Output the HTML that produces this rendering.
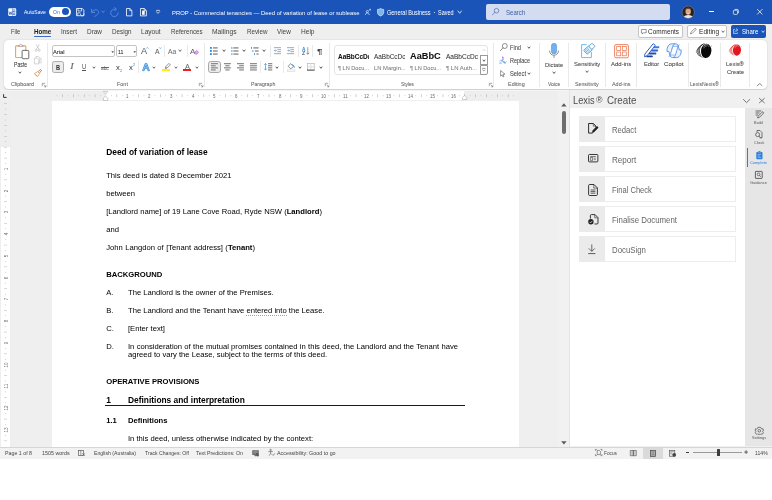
<!DOCTYPE html>
<html><head><meta charset="utf-8"><title>Word</title>
<style>
*{box-sizing:border-box;margin:0;padding:0}
html,body{width:772px;height:500px;overflow:hidden;background:#fff;font-family:"Liberation Sans",sans-serif;}
.a{position:absolute}
svg{overflow:visible}
.t{position:absolute;white-space:nowrap;transform-origin:0 0;display:block}
#win{position:absolute;left:0;top:0;width:772px;height:459px;background:#efefef;overflow:hidden;will-change:transform;filter:blur(0.35px)}
#title{position:absolute;left:0;top:0;width:772px;height:23.7px;background:#1b54b8;color:#fff}
#ribbon{position:absolute;left:4.3px;top:39.7px;width:762.5px;height:49.3px;background:#fff;border-radius:4.5px;box-shadow:0 0.5px 1.8px rgba(0,0,0,.16)}
#page{position:absolute;left:52px;top:101px;width:467.2px;height:346.5px;background:#fff}
#doc{color:#000}
#doc u{text-decoration:none;border-bottom:0.6px dotted #8aa2e6;padding-bottom:0}
#status{position:absolute;left:0;top:447.5px;width:772px;height:11.5px;background:#f2f2f2;border-top:0.6px solid #dadada}
.ui{color:#3a3a3a}
.rb .t{-webkit-text-stroke:0.05px currentColor}
</style></head><body>
<div id="win">
<div id="title"></div>
<div id="ribbon"></div>
<div id="page"></div>
<div class="ui">
<svg class="a" style="left:7.90px;top:8.00px;" width="8.4" height="8.2" viewBox="0 0 8.4 8.2"><rect x="0.2" y="0.3" width="8" height="7.6" rx="1.1" fill="#fff"/><path d="M4.9 2H7.4M4.9 3.6H7.4M4.9 5.2H7.4M4.9 6.7H7.4" stroke="#1b54b8" stroke-width="0.75"/><path d="M4.5 0.4V7.8" stroke="#1b54b8" stroke-width="0.5"/><path d="M1 3.4L1.8 6.6L2.5 4.2L3.2 6.6L4 3.4" fill="none" stroke="#1b54b8" stroke-width="0.65" stroke-linejoin="round"/></svg>
<span class="t" style="left:23.90px;top:9.00px;font-size:5.6px;line-height:6px;color:#fff;transform:scaleX(0.898);">AutoSave</span>
<div class="a" style="left:49.20px;top:6.70px;width:21.60px;height:9.90px;background:#fff;border-radius:5px"></div>
<span class="t" style="left:52.70px;top:8.60px;font-size:5.3px;line-height:6px;color:#3a66c4;transform:scaleX(0.948);">On</span>
<div class="a" style="left:62.00px;top:8.10px;width:7.20px;height:7.20px;background:#1b54b8;border-radius:50%"></div>
<svg class="a" style="left:76.30px;top:8.00px;" width="8.4" height="8.2" viewBox="0 0 8.4 8.2"><path d="M0.5 0.5H6.3L7.9 2.1V7.7H0.5Z" fill="none" stroke="#fff" stroke-width="0.8" stroke-linejoin="round"/><path d="M2 0.5V3H5.6V0.5M1.8 7.7V4.8H4.4" fill="none" stroke="#fff" stroke-width="0.7"/><path d="M4.6 5.6a1.7 1.7 0 1 0 3.2 0" fill="none" stroke="#fff" stroke-width="0.7"/></svg>
<svg class="a" style="left:91.00px;top:7.60px;" width="8.4" height="9" viewBox="0 0 8.4 9"><path d="M0.6 1.2V4.4H3.8" fill="none" stroke="#6b92df" stroke-width="0.8" stroke-linecap="round" stroke-linejoin="round"/><path d="M0.8 4.2C2.2 1.6 5.6 0.9 7.2 2.9C8.6 4.7 6.8 6.8 3.6 8.4" fill="none" stroke="#6b92df" stroke-width="0.8" stroke-linecap="round"/></svg>
<svg class="a" style="left:101.35px;top:10.43px;" width="4.295999999999999" height="3.54" viewBox="0 0 4.295999999999999 3.54"><path d="M1 1 L2.15 2.54 L3.30 1" fill="none" stroke="#6b92df" stroke-width="0.75" stroke-linecap="round" stroke-linejoin="round"/></svg>
<svg class="a" style="left:109.90px;top:7.60px;" width="8.8" height="9" viewBox="0 0 8.8 9"><path d="M5 1.2A3.7 3.7 0 1 0 8.1 4.9" fill="none" stroke="#6b92df" stroke-width="0.8" stroke-linecap="round"/><path d="M4.6 -0.4L6.4 1.2L4.6 2.8" fill="none" stroke="#6b92df" stroke-width="0.8" stroke-linecap="round" stroke-linejoin="round"/></svg>
<svg class="a" style="left:125.60px;top:7.90px;" width="6.4" height="8.4" viewBox="0 0 6.4 8.4"><path d="M0.5 0.5H3.9L5.9 2.5V7.9H0.5Z" fill="none" stroke="#fff" stroke-width="0.8" stroke-linejoin="round"/><path d="M3.8 0.6V2.6H5.8" fill="none" stroke="#fff" stroke-width="0.7"/></svg>
<svg class="a" style="left:139.90px;top:7.90px;" width="6.9" height="8.4" viewBox="0 0 6.9 8.4"><path d="M0.5 0.5H4.3L6.4 2.6V7.9H0.5Z" fill="none" stroke="#fff" stroke-width="0.8" stroke-linejoin="round"/><rect x="2.1" y="2.6" width="2.6" height="4.2" fill="#fff"/><path d="M4.2 0.6V2.6H6.3" fill="none" stroke="#fff" stroke-width="0.7"/></svg>
<svg class="a" style="left:155.50px;top:10.40px;" width="4" height="4" viewBox="0 0 4 4"><path d="M0.3 0.4H3.7" stroke="#fff" stroke-width="0.75"/><path d="M0.4 1.7L2 3.4L3.6 1.7" fill="none" stroke="#fff" stroke-width="0.75" stroke-linecap="round" stroke-linejoin="round"/></svg>
<span class="t" style="left:172.30px;top:8.70px;font-size:6.2px;line-height:7px;color:#fff;transform:scaleX(0.949);">PROP - Commercial tenancies — Deed of variation of lease or sublease</span>
<svg class="a" style="left:364.60px;top:8.60px;" width="6" height="6.4" viewBox="0 0 6 6.4"><circle cx="2.3" cy="2.6" r="1.1" fill="none" stroke="#fff" stroke-width="0.6"/><path d="M0.3 6C0.5 4.4 1.4 4 2.3 4S4.1 4.4 4.3 6" fill="none" stroke="#fff" stroke-width="0.6"/><path d="M3.6 1.6L5.6 0.3M5.6 0.3H4.2M5.6 0.3V1.6" fill="none" stroke="#fff" stroke-width="0.5"/></svg>
<svg class="a" style="left:376.80px;top:7.80px;" width="7.2" height="8.4" viewBox="0 0 7.2 8.4"><path d="M3.6 0.4C2.6 1.2 1.6 1.5 0.5 1.5V4.4C0.5 6.2 1.8 7.3 3.6 8C5.4 7.3 6.7 6.2 6.7 4.4V1.5C5.6 1.5 4.6 1.2 3.6 0.4Z" fill="#7eb6ec" stroke="#d6e8fb" stroke-width="0.7" stroke-linejoin="round"/></svg>
<span class="t" style="left:386.90px;top:8.70px;font-size:6.4px;line-height:7px;color:#fff;transform:scaleX(0.865);">General Business</span>
<div class="a" style="left:433.80px;top:12.00px;width:1.30px;height:1.30px;background:#fff;border-radius:50%"></div>
<span class="t" style="left:438.40px;top:8.70px;font-size:6.4px;line-height:7px;color:#fff;transform:scaleX(0.854);">Saved</span>
<svg class="a" style="left:456.68px;top:10.45px;" width="5.444" height="4.3100000000000005" viewBox="0 0 5.444 4.3100000000000005"><path d="M1 1 L2.72 3.31 L4.44 1" fill="none" stroke="#fff" stroke-width="0.75" stroke-linecap="round" stroke-linejoin="round"/></svg>
<div class="a" style="left:485.90px;top:4.10px;width:184.10px;height:15.50px;background:#d3dcf0;border-radius:2px"></div>
<svg class="a" style="left:492.30px;top:8.40px;" width="7.2" height="7.2" viewBox="0 0 7.2 7.2"><circle cx="4.5" cy="2.7" r="2.3" fill="none" stroke="#3b5ca8" stroke-width="0.6"/><path d="M2.9 4.4L0.4 6.9" stroke="#3b5ca8" stroke-width="0.6" stroke-linecap="round"/></svg>
<span class="t" style="left:506.30px;top:8.70px;font-size:6.9px;line-height:7px;color:#3f5ea6;transform:scaleX(0.878);">Search</span>
<svg class="a" style="left:681.60px;top:5.70px;" width="12.4" height="12.4" viewBox="0 0 12.4 12.4"><defs><clipPath id="av"><circle cx="6.2" cy="6.2" r="6.1"/></clipPath></defs><g clip-path="url(#av)"><rect width="12.4" height="12.4" fill="#2b211c"/><ellipse cx="6.2" cy="5.4" rx="2.7" ry="3.3" fill="#d9a78c"/><path d="M3.3 4.6C3.4 2.2 5 1.4 6.3 1.4S9 2.2 9.1 4.6C8.4 3.4 7.4 3 6.2 3S4 3.4 3.3 4.6Z" fill="#6a4a3a"/><path d="M1 12.4C1.6 9.6 3.6 9 6.2 9S10.8 9.6 11.4 12.4Z" fill="#e9e4e0"/><path d="M5 7.2C5.6 7.8 6.8 7.8 7.4 7.2" stroke="#fff" stroke-width="0.5" fill="none"/></g><circle cx="6.2" cy="6.2" r="6.1" fill="none" stroke="#cbb" stroke-width="0.3"/></svg>
<div class="a" style="left:709.30px;top:11.40px;width:5.20px;height:0.70px;background:#fff;"></div>
<svg class="a" style="left:733.00px;top:8.60px;" width="5.8" height="5.8" viewBox="0 0 5.8 5.8"><rect x="0.4" y="1.3" width="4.1" height="4.1" rx="0.8" fill="none" stroke="#fff" stroke-width="0.7"/><path d="M1.6 0.4H4.3A1.1 1.1 0 0 1 5.4 1.5V4.2" fill="none" stroke="#fff" stroke-width="0.7"/></svg>
<svg class="a" style="left:757.00px;top:8.90px;" width="5.6" height="5.6" viewBox="0 0 5.6 5.6"><path d="M0.4 0.4L5.2 5.2M5.2 0.4L0.4 5.2" stroke="#fff" stroke-width="0.75" stroke-linecap="round"/></svg>
<span class="t" style="left:10.90px;top:28.40px;font-size:6.8px;line-height:7px;color:#444;transform:scaleX(0.849);">File</span>
<span class="t" style="left:33.70px;top:28.40px;font-size:6.8px;line-height:7px;font-weight:700;color:#222;transform:scaleX(0.916);">Home</span>
<span class="t" style="left:60.90px;top:28.40px;font-size:6.8px;line-height:7px;color:#444;transform:scaleX(0.941);">Insert</span>
<span class="t" style="left:86.80px;top:28.40px;font-size:6.8px;line-height:7px;color:#444;transform:scaleX(0.945);">Draw</span>
<span class="t" style="left:111.70px;top:28.40px;font-size:6.8px;line-height:7px;color:#444;transform:scaleX(0.926);">Design</span>
<span class="t" style="left:141.20px;top:28.40px;font-size:6.8px;line-height:7px;color:#444;transform:scaleX(0.965);">Layout</span>
<span class="t" style="left:171.00px;top:28.40px;font-size:6.8px;line-height:7px;color:#444;transform:scaleX(0.909);">References</span>
<span class="t" style="left:212.40px;top:28.40px;font-size:6.8px;line-height:7px;color:#444;transform:scaleX(0.986);">Mailings</span>
<span class="t" style="left:246.90px;top:28.40px;font-size:6.8px;line-height:7px;color:#444;transform:scaleX(0.919);">Review</span>
<span class="t" style="left:276.90px;top:28.40px;font-size:6.8px;line-height:7px;color:#444;transform:scaleX(0.944);">View</span>
<span class="t" style="left:300.50px;top:28.40px;font-size:6.8px;line-height:7px;color:#444;transform:scaleX(0.965);">Help</span>
<div class="a" style="left:33.70px;top:36.30px;width:17.30px;height:1.20px;background:#3c6ac6;border-radius:0.6px"></div>
<div class="a" style="left:638.00px;top:25.40px;width:44.60px;height:12.30px;background:#fff;border:0.6px solid #c4c4c4;border-radius:2px;"></div>
<svg class="a" style="left:641.20px;top:28.60px;" width="5.6" height="5.6" viewBox="0 0 5.6 5.6"><path d="M0.4 0.5H5.2V3.8H2.4L1.2 5V3.8H0.4Z" fill="none" stroke="#444" stroke-width="0.55" stroke-linejoin="round"/></svg>
<span class="t" style="left:648.40px;top:28.20px;font-size:6.3px;line-height:7px;color:#2a2a2a;transform:scaleX(1.021);">Comments</span>
<div class="a" style="left:686.80px;top:25.40px;width:40.30px;height:12.30px;background:#fff;border:0.6px solid #c4c4c4;border-radius:2px;"></div>
<svg class="a" style="left:689.60px;top:28.20px;" width="6.4" height="6.4" viewBox="0 0 6.4 6.4"><path d="M0.5 5.9L1 4.2L4.6 0.6A0.8 0.8 0 0 1 5.8 1.8L2.2 5.4Z" fill="none" stroke="#444" stroke-width="0.55" stroke-linejoin="round"/></svg>
<span class="t" style="left:699.00px;top:28.20px;font-size:6.3px;line-height:7px;color:#2a2a2a;transform:scaleX(1.049);">Editing</span>
<svg class="a" style="left:721.33px;top:30.09px;" width="4.132" height="3.43" viewBox="0 0 4.132 3.43"><path d="M1 1 L2.07 2.43 L3.13 1" fill="none" stroke="#3c3c3c" stroke-width="0.75" stroke-linecap="round" stroke-linejoin="round"/></svg>
<div class="a" style="left:730.80px;top:25.40px;width:35.60px;height:12.30px;background:#1b54b8;border-radius:2px"></div>
<svg class="a" style="left:733.20px;top:28.40px;" width="5.6" height="6" viewBox="0 0 5.6 6"><path d="M2 1.4H0.5V5.5H4.6V4.4" fill="none" stroke="#fff" stroke-width="0.55"/><path d="M1.9 4C2.1 2.6 3 1.9 4.4 1.9M3.4 0.6L4.8 1.9L3.4 3.2" fill="none" stroke="#fff" stroke-width="0.55" stroke-linecap="round" stroke-linejoin="round"/></svg>
<span class="t" style="left:741.70px;top:28.20px;font-size:6.3px;line-height:7px;color:#fff;transform:scaleX(0.970);">Share</span>
<svg class="a" style="left:760.53px;top:30.09px;" width="4.132" height="3.43" viewBox="0 0 4.132 3.43"><path d="M1 1 L2.07 2.43 L3.13 1" fill="none" stroke="#fff" stroke-width="0.75" stroke-linecap="round" stroke-linejoin="round"/></svg>
<div class="rb">
<svg class="a" style="left:15.00px;top:43.60px;" width="14.4" height="15.2" viewBox="0 0 14.4 15.2"><rect x="0.6" y="1.9" width="10.2" height="11.6" rx="0.8" fill="#fff" stroke="#efa352" stroke-width="1.1"/><path d="M3.2 2.4V1.6H4.4A1.3 1.3 0 0 1 7 1.6H8.2V2.4Z" fill="#fff" stroke="#9a9a9a" stroke-width="0.7" stroke-linejoin="round"/><rect x="7.1" y="6.4" width="6.7" height="8.3" rx="0.9" fill="#fff" stroke="#555" stroke-width="0.85"/></svg>
<span class="t" style="left:13.80px;top:60.60px;font-size:6.3px;line-height:7px;color:#333;transform:scaleX(0.819);">Paste</span>
<svg class="a" style="left:18.46px;top:70.67px;" width="3.8859999999999997" height="3.2649999999999997" viewBox="0 0 3.8859999999999997 3.2649999999999997"><path d="M1 1 L1.94 2.26 L2.89 1" fill="none" stroke="#3c3c3c" stroke-width="0.8" stroke-linecap="round" stroke-linejoin="round"/></svg>
<svg class="a" style="left:35.40px;top:43.60px;" width="5.4" height="8" viewBox="0 0 5.4 8"><path d="M1 0.3L4 5.2M4.4 0.3L1.4 5.2" stroke="#b5b5b5" stroke-width="0.6" fill="none"/><circle cx="1.2" cy="6.3" r="1" fill="none" stroke="#b5b5b5" stroke-width="0.6"/><circle cx="4.2" cy="6.3" r="1" fill="none" stroke="#b5b5b5" stroke-width="0.6"/></svg>
<svg class="a" style="left:34.30px;top:56.20px;" width="7.8" height="8.4" viewBox="0 0 7.8 8.4"><path d="M2 1.8V0.5H4.4L5.8 1.9V6.2H4.9" fill="none" stroke="#b9b9b9" stroke-width="0.6"/><path d="M0.4 2.2H3.4L4.8 3.6V7.9H0.4Z" fill="none" stroke="#b9b9b9" stroke-width="0.6" stroke-linejoin="round"/><path d="M5.8 2.2H7.2V7H4.9" fill="none" stroke="#c4c4c4" stroke-width="0.55"/></svg>
<svg class="a" style="left:34.20px;top:69.00px;" width="8" height="8" viewBox="0 0 8 8"><path d="M4.2 2.6L6.6 0.5L7.5 1.4L5.6 3.9" fill="none" stroke="#555" stroke-width="0.65" stroke-linejoin="round"/><path d="M0.4 4.6L3.6 2.6L5.6 4.6L3.4 7.6Z" fill="#fff" stroke="#e8923c" stroke-width="0.8" stroke-linejoin="round"/><path d="M1.4 5.6L3.2 7.4" stroke="#e8923c" stroke-width="0.9"/></svg>
<span class="t" style="left:11.10px;top:81.20px;font-size:5.6px;line-height:6px;color:#636363;transform:scaleX(0.964);">Clipboard</span>
<svg class="a" style="left:42.00px;top:82.50px;" width="4.2" height="4.2" viewBox="0 0 4.2 4.2"><path d="M0.3 0.3H3.2M0.3 0.3V3.2" stroke="#666" stroke-width="0.55" fill="none"/><path d="M1.6 1.6L3.9 3.9M3.9 2.2V3.9H2.2" stroke="#666" stroke-width="0.55" fill="none"/></svg>
<div class="a" style="left:47.00px;top:42.50px;width:0.80px;height:44.00px;background:#e9e9e9;"></div>
<div class="a" style="left:52.10px;top:45.00px;width:62.50px;height:12.20px;background:#fff;border:0.6px solid #c4c4c4;border-radius:2px;"></div>
<span class="t" style="left:53.20px;top:48.60px;font-size:6px;line-height:6px;color:#222;transform:scaleX(0.966);">Arial</span>
<svg class="a" style="left:110.60px;top:50.60px;" width="3.4" height="2.2" viewBox="0 0 3.4 2.2"><path d="M0.3 0.3H3.1L1.7 1.9Z" fill="#555"/></svg>
<div class="a" style="left:116.40px;top:45.00px;width:21.00px;height:12.20px;background:#fff;border:0.6px solid #c4c4c4;border-radius:2px;"></div>
<span class="t" style="left:117.70px;top:48.60px;font-size:6px;line-height:6px;color:#222;transform:scaleX(0.867);">11</span>
<svg class="a" style="left:132.70px;top:50.60px;" width="3.4" height="2.2" viewBox="0 0 3.4 2.2"><path d="M0.3 0.3H3.1L1.7 1.9Z" fill="#555"/></svg>
<span class="t" style="left:140.60px;top:45.80px;font-size:8.8px;line-height:10px;color:#5c5c5c;transform:scaleX(1.039);">A</span>
<svg class="a" style="left:146.40px;top:46.80px;" width="2.6" height="2" viewBox="0 0 2.6 2"><path d="M0.2 1.6L1.3 0.4L2.4 1.6" fill="none" stroke="#2f86d6" stroke-width="0.6"/></svg>
<span class="t" style="left:154.80px;top:47.80px;font-size:6.3px;line-height:7px;color:#5c5c5c;transform:scaleX(1.071);">A</span>
<svg class="a" style="left:158.90px;top:47.20px;" width="2.6" height="2" viewBox="0 0 2.6 2"><path d="M0.2 0.4L1.3 1.6L2.4 0.4" fill="none" stroke="#2f86d6" stroke-width="0.6"/></svg>
<div class="a" style="left:164.00px;top:45.20px;width:0.80px;height:11.60px;background:#e9e9e9;"></div>
<span class="t" style="left:168.00px;top:47.80px;font-size:6.4px;line-height:7px;color:#6e6e6e;transform:scaleX(1.060);">Aa</span>
<svg class="a" style="left:178.43px;top:49.48px;" width="4.132" height="3.43" viewBox="0 0 4.132 3.43"><path d="M1 1 L2.07 2.43 L3.13 1" fill="none" stroke="#3c3c3c" stroke-width="0.75" stroke-linecap="round" stroke-linejoin="round"/></svg>
<div class="a" style="left:187.00px;top:45.20px;width:0.80px;height:11.60px;background:#e9e9e9;"></div>
<span class="t" style="left:190.20px;top:46.80px;font-size:8px;line-height:9px;color:#666;transform:scaleX(1.012);">A</span>
<svg class="a" style="left:193.60px;top:50.20px;" width="5" height="4.6" viewBox="0 0 5 4.6"><path d="M2.6 0.4L4.6 2.2L2.6 4.2H1.6L0.4 3Z" fill="#d9b3ee" stroke="#a64fd0" stroke-width="0.6" stroke-linejoin="round"/></svg>
<div class="a" style="left:52.40px;top:61.20px;width:11.40px;height:12.20px;background:#ececec;border:0.7px solid #adadad;border-radius:2.3px"></div>
<span class="t" style="left:56.20px;top:62.80px;font-size:7.4px;line-height:9px;font-weight:700;color:#333;transform:scaleX(0.767);">B</span>
<span class="t" style="left:70.00px;top:62.80px;font-size:7.2px;line-height:9px;color:#6a6a6a;transform:scaleX(1.600);font-style:italic;font-family:'Liberation Serif',serif;">I</span>
<span class="t" style="left:82.00px;top:63.40px;font-size:7px;line-height:7px;color:#555;transform:scaleX(0.831);">U</span>
<div class="a" style="left:82.00px;top:70.10px;width:4.20px;height:0.60px;background:#555;"></div>
<svg class="a" style="left:91.62px;top:66.14px;" width="3.968" height="3.3200000000000003" viewBox="0 0 3.968 3.3200000000000003"><path d="M1 1 L1.98 2.32 L2.97 1" fill="none" stroke="#3c3c3c" stroke-width="0.75" stroke-linecap="round" stroke-linejoin="round"/></svg>
<span class="t" style="left:100.90px;top:64.60px;font-size:5.4px;line-height:6px;color:#666;transform:scaleX(0.884);">abc</span>
<div class="a" style="left:100.60px;top:67.30px;width:8.30px;height:0.50px;background:#666;"></div>
<span class="t" style="left:115.80px;top:63.80px;font-size:7px;line-height:7px;color:#444;transform:scaleX(1.086);">x</span>
<span class="t" style="left:119.90px;top:68.60px;font-size:3.6px;line-height:4px;color:#2f86d6;transform:scaleX(0.999);">2</span>
<span class="t" style="left:128.90px;top:63.80px;font-size:7px;line-height:7px;color:#444;transform:scaleX(1.086);">x</span>
<span class="t" style="left:133.10px;top:63.20px;font-size:3.6px;line-height:4px;color:#2f86d6;transform:scaleX(0.999);">2</span>
<div class="a" style="left:137.90px;top:61.20px;width:0.80px;height:11.60px;background:#e9e9e9;"></div>
<svg class="a" style="left:141.50px;top:63.00px;" width="8" height="8" viewBox="0 0 8 8"><path d="M0.5 7.7L3.2 0.4H4.8L7.5 7.7H5.9L4 2.4L2.1 7.7Z" fill="#9fd0f5" stroke="#2e86d8" stroke-width="0.75" stroke-linejoin="round"/><path d="M2.6 5.4H5.4" stroke="#2e86d8" stroke-width="0.7"/></svg>
<svg class="a" style="left:152.02px;top:66.14px;" width="3.968" height="3.3200000000000003" viewBox="0 0 3.968 3.3200000000000003"><path d="M1 1 L1.98 2.32 L2.97 1" fill="none" stroke="#3c3c3c" stroke-width="0.75" stroke-linecap="round" stroke-linejoin="round"/></svg>
<svg class="a" style="left:163.60px;top:63.20px;" width="7" height="6" viewBox="0 0 7 6"><path d="M4.9 0.4L6.4 1.9L2.9 5.2L1.2 5.6L1.6 3.9Z" fill="#fff" stroke="#555" stroke-width="0.6" stroke-linejoin="round"/><path d="M1.7 3.8L3 5.1" stroke="#555" stroke-width="0.5"/></svg>
<div class="a" style="left:162.10px;top:69.20px;width:8.30px;height:1.90px;background:#ffee1a;"></div>
<svg class="a" style="left:174.12px;top:66.14px;" width="3.968" height="3.3200000000000003" viewBox="0 0 3.968 3.3200000000000003"><path d="M1 1 L1.98 2.32 L2.97 1" fill="none" stroke="#3c3c3c" stroke-width="0.75" stroke-linecap="round" stroke-linejoin="round"/></svg>
<span class="t" style="left:184.60px;top:62.50px;font-size:6.8px;line-height:7px;color:#6a6a6a;transform:scaleX(1.080);">A</span>
<div class="a" style="left:182.90px;top:69.20px;width:8.30px;height:1.90px;background:#ee1d25;"></div>
<svg class="a" style="left:194.52px;top:66.14px;" width="3.968" height="3.3200000000000003" viewBox="0 0 3.968 3.3200000000000003"><path d="M1 1 L1.98 2.32 L2.97 1" fill="none" stroke="#3c3c3c" stroke-width="0.75" stroke-linecap="round" stroke-linejoin="round"/></svg>
<span class="t" style="left:116.60px;top:81.20px;font-size:5.6px;line-height:6px;color:#636363;transform:scaleX(0.973);">Font</span>
<svg class="a" style="left:198.60px;top:82.50px;" width="4.2" height="4.2" viewBox="0 0 4.2 4.2"><path d="M0.3 0.3H3.2M0.3 0.3V3.2" stroke="#666" stroke-width="0.55" fill="none"/><path d="M1.6 1.6L3.9 3.9M3.9 2.2V3.9H2.2" stroke="#666" stroke-width="0.55" fill="none"/></svg>
<div class="a" style="left:204.00px;top:42.50px;width:0.80px;height:44.00px;background:#e9e9e9;"></div>
<svg class="a" style="left:210.20px;top:47.00px;" width="8" height="8.2" viewBox="0 0 8 8.2"><rect x="0" y="0" width="1.8" height="1.8" fill="#2f86d6"/><rect x="3" y="0.2" width="4.7" height="1.4" fill="#8c8c8c"/><rect x="0" y="3.1" width="1.8" height="1.8" fill="#2f86d6"/><rect x="3" y="3.3000000000000003" width="4.7" height="1.4" fill="#8c8c8c"/><rect x="0" y="6.2" width="1.8" height="1.8" fill="#2f86d6"/><rect x="3" y="6.4" width="4.7" height="1.4" fill="#8c8c8c"/></svg>
<svg class="a" style="left:221.93px;top:49.28px;" width="4.132" height="3.43" viewBox="0 0 4.132 3.43"><path d="M1 1 L2.07 2.43 L3.13 1" fill="none" stroke="#3c3c3c" stroke-width="0.85" stroke-linecap="round" stroke-linejoin="round"/></svg>
<svg class="a" style="left:230.90px;top:47.00px;" width="8" height="8.2" viewBox="0 0 8 8.2"><rect x="0.5" y="-0.1" width="0.8" height="2" fill="#2f86d6"/><rect x="2.4" y="0.2" width="5.1" height="1.4" fill="#8c8c8c"/><rect x="0.5" y="3.0" width="0.8" height="2" fill="#2f86d6"/><rect x="2.4" y="3.3000000000000003" width="5.1" height="1.4" fill="#8c8c8c"/><rect x="0.5" y="6.1000000000000005" width="0.8" height="2" fill="#2f86d6"/><rect x="2.4" y="6.4" width="5.1" height="1.4" fill="#8c8c8c"/></svg>
<svg class="a" style="left:242.33px;top:49.28px;" width="4.132" height="3.43" viewBox="0 0 4.132 3.43"><path d="M1 1 L2.07 2.43 L3.13 1" fill="none" stroke="#3c3c3c" stroke-width="0.85" stroke-linecap="round" stroke-linejoin="round"/></svg>
<svg class="a" style="left:251.30px;top:47.00px;" width="8" height="8.2" viewBox="0 0 8 8.2"><rect x="0" y="-0.1" width="0.8" height="2" fill="#2f86d6"/><rect x="2.4" y="0.2" width="5.2" height="1.4" fill="#8c8c8c"/><rect x="1.5" y="3.0" width="0.8" height="2" fill="#2f86d6"/><rect x="3.9" y="3.3000000000000003" width="3.7" height="1.4" fill="#8c8c8c"/><rect x="3.1" y="6.1000000000000005" width="0.8" height="2" fill="#2f86d6"/><rect x="5.5" y="6.4" width="2.1" height="1.4" fill="#8c8c8c"/></svg>
<svg class="a" style="left:261.93px;top:49.28px;" width="4.132" height="3.43" viewBox="0 0 4.132 3.43"><path d="M1 1 L2.07 2.43 L3.13 1" fill="none" stroke="#3c3c3c" stroke-width="0.85" stroke-linecap="round" stroke-linejoin="round"/></svg>
<div class="a" style="left:270.00px;top:45.20px;width:0.80px;height:11.60px;background:#e9e9e9;"></div>
<svg class="a" style="left:274.10px;top:47.30px;" width="7" height="7.4" viewBox="0 0 7 7.4"><rect x="0" y="0" width="7" height="1.2" fill="#b5b5b5"/><rect x="3.4" y="2" width="3.6" height="1.2" fill="#b5b5b5"/><rect x="3.4" y="4" width="3.6" height="1.2" fill="#b5b5b5"/><rect x="0" y="6" width="7" height="1.2" fill="#b5b5b5"/><path d="M2.8 3.6H0.6M1.5 2.6L0.5 3.6L1.5 4.6" stroke="#2f86d6" stroke-width="0.6" fill="none"/></svg>
<svg class="a" style="left:287.40px;top:47.30px;" width="7" height="7.4" viewBox="0 0 7 7.4"><rect x="0" y="0" width="7" height="1.2" fill="#b5b5b5"/><rect x="3.4" y="2" width="3.6" height="1.2" fill="#b5b5b5"/><rect x="3.4" y="4" width="3.6" height="1.2" fill="#b5b5b5"/><rect x="0" y="6" width="7" height="1.2" fill="#b5b5b5"/><path d="M0.4 3.6H2.6M1.7 2.6L2.7 3.6L1.7 4.6" stroke="#2f86d6" stroke-width="0.6" fill="none"/></svg>
<div class="a" style="left:298.00px;top:45.20px;width:0.80px;height:11.60px;background:#e9e9e9;"></div>
<span class="t" style="left:301.60px;top:47.00px;font-size:4.8px;line-height:5px;font-weight:700;color:#2f86d6;transform:scaleX(0.981);">A</span>
<span class="t" style="left:301.80px;top:51.20px;font-size:4.6px;line-height:5px;color:#444;transform:scaleX(1.103);">Z</span>
<svg class="a" style="left:306.30px;top:47.20px;" width="3.6" height="7.8" viewBox="0 0 3.6 7.8"><path d="M1.8 0.2V7.2M0.3 5.7L1.8 7.3L3.3 5.7" stroke="#555" stroke-width="0.6" fill="none"/></svg>
<div class="a" style="left:312.10px;top:45.20px;width:0.80px;height:11.60px;background:#e9e9e9;"></div>
<span class="t" style="left:317.20px;top:46.60px;font-size:8px;line-height:9px;color:#333;transform:scaleX(1.257);">¶</span>
<div class="a" style="left:208.30px;top:61.20px;width:12.30px;height:12.20px;background:#ececec;border:0.7px solid #a8a8a8;border-radius:2.8px"></div>
<svg class="a" style="left:210.90px;top:63.30px;" width="7" height="8" viewBox="0 0 7 8"><rect x="0" y="0" width="6.9" height="1.25" fill="#8c8c8c"/><rect x="0" y="2.1" width="4.7" height="1.25" fill="#8c8c8c"/><rect x="0" y="4.2" width="6.9" height="1.25" fill="#8c8c8c"/><rect x="0" y="6.3" width="4.7" height="1.25" fill="#8c8c8c"/></svg>
<svg class="a" style="left:224.00px;top:63.30px;" width="7" height="8" viewBox="0 0 7 8"><rect x="0" y="0" width="6.9" height="1.25" fill="#8c8c8c"/><rect x="1.3" y="2.1" width="4.3" height="1.25" fill="#8c8c8c"/><rect x="0" y="4.2" width="6.9" height="1.25" fill="#8c8c8c"/><rect x="1.3" y="6.3" width="4.3" height="1.25" fill="#8c8c8c"/></svg>
<svg class="a" style="left:237.10px;top:63.30px;" width="7" height="8" viewBox="0 0 7 8"><rect x="0" y="0" width="6.9" height="1.25" fill="#8c8c8c"/><rect x="2.2" y="2.1" width="4.7" height="1.25" fill="#8c8c8c"/><rect x="0" y="4.2" width="6.9" height="1.25" fill="#8c8c8c"/><rect x="2.2" y="6.3" width="4.7" height="1.25" fill="#8c8c8c"/></svg>
<svg class="a" style="left:250.00px;top:63.30px;" width="7" height="8" viewBox="0 0 7 8"><rect x="0" y="0" width="6.9" height="1.25" fill="#8c8c8c"/><rect x="0" y="2.1" width="6.9" height="1.25" fill="#8c8c8c"/><rect x="0" y="4.2" width="6.9" height="1.25" fill="#8c8c8c"/><rect x="0" y="6.3" width="6.9" height="1.25" fill="#8c8c8c"/></svg>
<div class="a" style="left:260.20px;top:61.20px;width:0.80px;height:11.60px;background:#e9e9e9;"></div>
<svg class="a" style="left:263.80px;top:63.40px;" width="8.4" height="8" viewBox="0 0 8.4 8"><path d="M1.5 0.6V7M0.3 1.9L1.5 0.5L2.7 1.9M0.3 5.7L1.5 7.1L2.7 5.7" stroke="#2f86d6" stroke-width="0.65" fill="none"/><rect x="4" y="0" width="4.3" height="1.25" fill="#8c8c8c"/><rect x="4" y="2.1" width="4.3" height="1.25" fill="#8c8c8c"/><rect x="4" y="4.2" width="4.3" height="1.25" fill="#8c8c8c"/><rect x="4" y="6.3" width="4.3" height="1.25" fill="#8c8c8c"/></svg>
<svg class="a" style="left:274.72px;top:66.14px;" width="3.968" height="3.3200000000000003" viewBox="0 0 3.968 3.3200000000000003"><path d="M1 1 L1.98 2.32 L2.97 1" fill="none" stroke="#3c3c3c" stroke-width="0.85" stroke-linecap="round" stroke-linejoin="round"/></svg>
<div class="a" style="left:283.00px;top:61.20px;width:0.80px;height:11.60px;background:#e9e9e9;"></div>
<svg class="a" style="left:286.60px;top:63.00px;" width="8.2" height="8.4" viewBox="0 0 8.2 8.4"><path d="M3.6 0.6L6.6 3.4L3.8 5.8L1.2 3.4Z" fill="#fff" stroke="#555" stroke-width="0.65" stroke-linejoin="round"/><path d="M5.2 1.6C6.8 2 7.4 3.4 7.2 4.8" fill="none" stroke="#2f86d6" stroke-width="0.8"/><rect x="0.2" y="6.9" width="7.8" height="1.3" fill="#fff" stroke="#bcbcbc" stroke-width="0.4"/></svg>
<svg class="a" style="left:298.32px;top:66.14px;" width="3.968" height="3.3200000000000003" viewBox="0 0 3.968 3.3200000000000003"><path d="M1 1 L1.98 2.32 L2.97 1" fill="none" stroke="#3c3c3c" stroke-width="0.85" stroke-linecap="round" stroke-linejoin="round"/></svg>
<svg class="a" style="left:307.30px;top:63.30px;" width="7.6" height="7.6" viewBox="0 0 7.6 7.6"><rect x="0.4" y="0.4" width="6.8" height="6.8" fill="none" stroke="#b5b5b5" stroke-width="0.7"/><path d="M3.8 0.5V7.1M0.5 3.8H7.1" stroke="#c9c9c9" stroke-width="0.6"/><path d="M0 7.1H7.6" stroke="#444" stroke-width="0.9"/></svg>
<svg class="a" style="left:318.72px;top:66.14px;" width="3.968" height="3.3200000000000003" viewBox="0 0 3.968 3.3200000000000003"><path d="M1 1 L1.98 2.32 L2.97 1" fill="none" stroke="#3c3c3c" stroke-width="0.85" stroke-linecap="round" stroke-linejoin="round"/></svg>
<span class="t" style="left:250.80px;top:81.20px;font-size:5.6px;line-height:6px;color:#636363;transform:scaleX(0.929);">Paragraph</span>
<svg class="a" style="left:325.20px;top:82.50px;" width="4.2" height="4.2" viewBox="0 0 4.2 4.2"><path d="M0.3 0.3H3.2M0.3 0.3V3.2" stroke="#666" stroke-width="0.55" fill="none"/><path d="M1.6 1.6L3.9 3.9M3.9 2.2V3.9H2.2" stroke="#666" stroke-width="0.55" fill="none"/></svg>
<div class="a" style="left:329.10px;top:42.50px;width:0.80px;height:44.00px;background:#e9e9e9;"></div>
<div class="a" style="left:334.40px;top:45.20px;width:153.30px;height:29.90px;background:#fff;border:0.7px solid #e4e4e4;border-radius:3px"></div>
<div class="a" style="left:337.8px;top:50px;width:31.2px;height:12px;overflow:hidden"><span class="t" style="left:0.00px;top:2.70px;font-size:6.6px;line-height:7px;font-weight:700;color:#111;transform:scaleX(0.973);">AaBbCcDc</span></div>
<span class="t" style="left:337.90px;top:65.40px;font-size:5.7px;line-height:6px;color:#7a7a7a;transform:scaleX(0.985);">¶ LN Docu...</span>
<div class="a" style="left:374px;top:50px;width:31px;height:12px;overflow:hidden"><span class="t" style="left:0.00px;top:2.70px;font-size:6.6px;line-height:7px;color:#333;transform:scaleX(0.973);">AaBbCcDc</span></div>
<span class="t" style="left:374.00px;top:65.40px;font-size:5.7px;line-height:6px;color:#7a7a7a;transform:scaleX(1.024);">LN Margin...</span>
<span class="t" style="left:410.40px;top:51.00px;font-size:8.8px;line-height:10px;font-weight:700;color:#111;transform:scaleX(1.047);">AaBbC</span>
<span class="t" style="left:410.40px;top:65.40px;font-size:5.7px;line-height:6px;color:#7a7a7a;transform:scaleX(0.985);">¶ LN Docu...</span>
<div class="a" style="left:446.2px;top:50px;width:31.6px;height:12px;overflow:hidden"><span class="t" style="left:0.00px;top:2.70px;font-size:6.6px;line-height:7px;color:#333;transform:scaleX(0.991);">AaBbCcDc</span></div>
<span class="t" style="left:446.20px;top:65.40px;font-size:5.7px;line-height:6px;color:#7a7a7a;transform:scaleX(1.045);">¶ LN Auth...</span>
<svg class="a" style="left:482.00px;top:49.20px;" width="4" height="2.4" viewBox="0 0 4 2.4"><path d="M0.3 2L2 0.4L3.7 2" fill="none" stroke="#bdbdbd" stroke-width="0.55"/></svg>
<div class="a" style="left:480.30px;top:55.20px;width:7.40px;height:9.90px;background:#fff;border:0.6px solid #9a9a9a"></div>
<svg class="a" style="left:482.02px;top:58.94px;" width="3.968" height="3.3200000000000003" viewBox="0 0 3.968 3.3200000000000003"><path d="M1 1 L1.98 2.32 L2.97 1" fill="none" stroke="#3c3c3c" stroke-width="0.8" stroke-linecap="round" stroke-linejoin="round"/></svg>
<div class="a" style="left:480.30px;top:64.60px;width:7.40px;height:10.50px;background:#fff;border:0.6px solid #9a9a9a;border-radius:0 0 2px 0"></div>
<svg class="a" style="left:482.20px;top:68.00px;" width="3.6" height="3.6" viewBox="0 0 3.6 3.6"><path d="M0.2 0.4H3.4" stroke="#444" stroke-width="0.55"/><path d="M0.5 1.7L1.8 3L3.1 1.7" fill="none" stroke="#444" stroke-width="0.6"/></svg>
<span class="t" style="left:401.30px;top:81.20px;font-size:5.6px;line-height:6px;color:#636363;transform:scaleX(0.846);">Styles</span>
<svg class="a" style="left:488.60px;top:82.50px;" width="4.2" height="4.2" viewBox="0 0 4.2 4.2"><path d="M0.3 0.3H3.2M0.3 0.3V3.2" stroke="#666" stroke-width="0.55" fill="none"/><path d="M1.6 1.6L3.9 3.9M3.9 2.2V3.9H2.2" stroke="#666" stroke-width="0.55" fill="none"/></svg>
<div class="a" style="left:492.80px;top:42.50px;width:0.80px;height:44.00px;background:#e9e9e9;"></div>
<svg class="a" style="left:500.20px;top:42.90px;" width="7.8" height="8.2" viewBox="0 0 7.8 8.2"><circle cx="4.8" cy="3" r="2.5" fill="none" stroke="#555" stroke-width="0.65"/><path d="M3 4.9L0.4 7.7" stroke="#555" stroke-width="0.7" stroke-linecap="round"/></svg>
<span class="t" style="left:509.90px;top:43.80px;font-size:6.3px;line-height:7px;color:#424242;transform:scaleX(0.898);">Find</span>
<svg class="a" style="left:527.02px;top:46.14px;" width="3.968" height="3.3200000000000003" viewBox="0 0 3.968 3.3200000000000003"><path d="M1 1 L1.98 2.32 L2.97 1" fill="none" stroke="#3c3c3c" stroke-width="0.8" stroke-linecap="round" stroke-linejoin="round"/></svg>
<svg class="a" style="left:499.00px;top:56.20px;" width="8" height="8.4" viewBox="0 0 8 8.4"><text x="2.7" y="3.8" font-size="4.6" font-family="Liberation Sans" fill="#b04fd0">b</text><path d="M0.4 5.2C1.4 3.9 2.6 3.9 3.6 5.2M3.6 5.2L2.2 5.4M3.6 5.2L3.5 3.9" fill="none" stroke="#2f86d6" stroke-width="0.55"/><path d="M4.4 5.6C5.4 6.9 6.6 6.9 7.6 5.6M4.4 5.6L5.8 5.4M4.4 5.6L4.5 6.9" fill="none" stroke="#2f86d6" stroke-width="0.55"/><text x="0.6" y="8.2" font-size="3.6" font-family="Liberation Sans" fill="#2f86d6">a</text><text x="5.2" y="8.2" font-size="3.6" font-family="Liberation Sans" fill="#2f86d6">c</text></svg>
<span class="t" style="left:509.90px;top:56.80px;font-size:6.3px;line-height:7px;color:#424242;transform:scaleX(0.870);">Replace</span>
<svg class="a" style="left:500.20px;top:70.00px;" width="5.8" height="7.2" viewBox="0 0 5.8 7.2"><path d="M0.6 0.5L5 4.2L2.9 4.5L4 6.6L3.1 7L2 4.9L0.6 6.2Z" fill="#fff" stroke="#555" stroke-width="0.6" stroke-linejoin="round"/></svg>
<span class="t" style="left:509.90px;top:69.60px;font-size:6.3px;line-height:7px;color:#424242;transform:scaleX(0.914);">Select</span>
<svg class="a" style="left:526.82px;top:71.94px;" width="3.968" height="3.3200000000000003" viewBox="0 0 3.968 3.3200000000000003"><path d="M1 1 L1.98 2.32 L2.97 1" fill="none" stroke="#3c3c3c" stroke-width="0.8" stroke-linecap="round" stroke-linejoin="round"/></svg>
<span class="t" style="left:508.00px;top:81.20px;font-size:5.6px;line-height:6px;color:#636363;transform:scaleX(0.975);">Editing</span>
<div class="a" style="left:538.90px;top:42.50px;width:0.80px;height:44.00px;background:#e9e9e9;"></div>
<svg class="a" style="left:549.20px;top:42.90px;" width="10" height="15.4" viewBox="0 0 10 15.4"><rect x="2.4" y="0.3" width="5.2" height="10.6" rx="2.6" fill="#74b0ec" stroke="#3d8ade" stroke-width="0.5"/><path d="M0.5 7.6C0.5 13.8 9.5 13.8 9.5 7.6" fill="none" stroke="#666" stroke-width="0.7"/><path d="M5 12.4V15" stroke="#666" stroke-width="0.7"/></svg>
<span class="t" style="left:544.90px;top:60.60px;font-size:6.2px;line-height:7px;color:#424242;transform:scaleX(0.948);">Dictate</span>
<svg class="a" style="left:551.83px;top:70.58px;" width="4.132" height="3.43" viewBox="0 0 4.132 3.43"><path d="M1 1 L2.07 2.43 L3.13 1" fill="none" stroke="#3c3c3c" stroke-width="0.8" stroke-linecap="round" stroke-linejoin="round"/></svg>
<span class="t" style="left:547.70px;top:81.20px;font-size:5.6px;line-height:6px;color:#636363;transform:scaleX(0.898);">Voice</span>
<div class="a" style="left:568.00px;top:42.50px;width:0.80px;height:44.00px;background:#e9e9e9;"></div>
<svg class="a" style="left:581.00px;top:42.80px;" width="14.4" height="15.2" viewBox="0 0 14.4 15.2"><path d="M5.6 1.6H0.6V14.6H10.4V9" fill="none" stroke="#5fb4ea" stroke-width="0.9" stroke-linejoin="round"/><g transform="rotate(-40 7.6 6.4)"><rect x="3.2" y="3.8" width="7.2" height="5.4" rx="0.8" fill="#dff0fb" stroke="#3e9be0" stroke-width="0.8"/><path d="M4.6 5V8M6 5V8M7.4 5V8" stroke="#3e9be0" stroke-width="0.6"/></g><g transform="rotate(-40 11 3.6)"><rect x="8.8" y="1" width="4.6" height="4.6" rx="1" fill="#fff" stroke="#3e9be0" stroke-width="0.8"/></g></svg>
<span class="t" style="left:573.80px;top:60.30px;font-size:6.2px;line-height:7px;color:#424242;transform:scaleX(0.942);">Sensitivity</span>
<svg class="a" style="left:584.93px;top:70.19px;" width="4.132" height="3.43" viewBox="0 0 4.132 3.43"><path d="M1 1 L2.07 2.43 L3.13 1" fill="none" stroke="#3c3c3c" stroke-width="0.8" stroke-linecap="round" stroke-linejoin="round"/></svg>
<span class="t" style="left:575.10px;top:81.20px;font-size:5.6px;line-height:6px;color:#636363;transform:scaleX(0.940);">Sensitivity</span>
<div class="a" style="left:605.40px;top:42.50px;width:0.80px;height:44.00px;background:#e9e9e9;"></div>
<svg class="a" style="left:614.00px;top:43.60px;" width="15" height="14.4" viewBox="0 0 15 14.4"><rect x="0.6" y="0.6" width="13.8" height="13.2" rx="1.4" fill="#fff" stroke="#e8714d" stroke-width="0.85"/><rect x="2.7" y="2.6" width="4" height="3.8" fill="#fff" stroke="#e8714d" stroke-width="0.7"/><rect x="8.3" y="2.6" width="4" height="3.8" fill="#fff" stroke="#e8714d" stroke-width="0.7"/><rect x="2.7" y="8" width="4" height="3.8" fill="#fff" stroke="#e8714d" stroke-width="0.7"/><rect x="8.3" y="8" width="4" height="3.8" fill="#fff" stroke="#e8714d" stroke-width="0.7"/></svg>
<span class="t" style="left:611.40px;top:60.30px;font-size:6.2px;line-height:7px;color:#424242;transform:scaleX(0.966);">Add-ins</span>
<span class="t" style="left:612.00px;top:81.20px;font-size:5.6px;line-height:6px;color:#636363;transform:scaleX(0.969);">Add-ins</span>
<div class="a" style="left:635.60px;top:42.50px;width:0.80px;height:44.00px;background:#e9e9e9;"></div>
<svg class="a" style="left:643.80px;top:43.20px;" width="15.6" height="14.8" viewBox="0 0 15.6 14.8"><path d="M9.2 4.3H14.4" stroke="#3b7be6" stroke-width="2" stroke-linecap="round"/><path d="M7.6 7.4H13.2" stroke="#2c63d2" stroke-width="2" stroke-linecap="round"/><path d="M5.6 10.5H11.4" stroke="#234fb8" stroke-width="2" stroke-linecap="round"/><path d="M3.2 13.4H8" stroke="#1c3f9c" stroke-width="1.7" stroke-linecap="round"/><path d="M9.2 0.7L11.3 2.3L3.2 12.6L0.6 13.9L0.9 11Z" fill="#fff" stroke="#2457c5" stroke-width="0.95" stroke-linejoin="round"/></svg>
<span class="t" style="left:644.20px;top:60.30px;font-size:6.2px;line-height:7px;color:#424242;transform:scaleX(0.932);">Editor</span>
<svg class="a" style="left:665.80px;top:42.90px;" width="16.2" height="15.4" viewBox="0 0 16.2 15.4"><path d="M5.6 0.8H9.6C11 0.8 11.8 1.6 12.2 3L13.4 7H15.2C15.6 8.4 14.6 14.6 10.6 14.6H6.6C5.2 14.6 4.4 13.8 4 12.4L2.8 8.4H1C0.6 7 1.6 0.8 5.6 0.8Z" fill="#eaf2fd" stroke="#3f7fe0" stroke-width="0.8" stroke-linejoin="round"/><path d="M9 0.9C7.6 1.2 7 2.4 6.6 3.8L4.6 11.2C4.2 12.6 3.6 13.6 2.6 13.6" fill="none" stroke="#3f7fe0" stroke-width="0.7"/><path d="M7.2 14.5C8.6 14.2 9.2 13 9.6 11.6L11.6 4.2C12 2.8 12.6 1.8 13.6 1.8" fill="none" stroke="#3f7fe0" stroke-width="0.7"/><path d="M6.9 3.4H11.9L9.3 12H4.3Z" fill="#fff" stroke="#5b95ea" stroke-width="0.6" stroke-linejoin="round"/></svg>
<span class="t" style="left:664.10px;top:60.30px;font-size:6.2px;line-height:7px;color:#424242;transform:scaleX(1.005);">Copilot</span>
<div class="a" style="left:687.90px;top:42.50px;width:0.80px;height:44.00px;background:#e9e9e9;"></div>
<svg class="a" style="left:696.40px;top:42.50px;" width="16.0" height="16.0" viewBox="0 0 16 16"><ellipse cx="10.2" cy="7.9" rx="5.2" ry="7.2" fill="#0a0a0a" transform="rotate(5 10.2 7.9)"/><path d="M8.6 0.7C4.6 1.6 3 5.4 3.5 9C3.8 11.4 4.8 13.4 6.2 14.6" fill="none" stroke="#0a0a0a" stroke-width="0.7"/><path d="M7.2 1.2C3.4 2.6 1.8 6 2.3 9.2C2.6 11.2 3.4 12.8 4.6 13.8" fill="none" stroke="#0a0a0a" stroke-width="0.6"/><path d="M5.6 2.4C2.2 4 0.8 6.8 1.2 9.4C1.4 10.8 2 12 3 12.8" fill="none" stroke="#0a0a0a" stroke-width="0.55"/><path d="M3.6 4.4C1 6 0 8 0.4 10" fill="none" stroke="#0a0a0a" stroke-width="0.45" opacity="0.7"/><path d="M7.6 3.4C8.4 2 10 1.3 11.8 1.8" fill="none" stroke="#fff" stroke-width="0.6"/><path d="M7.8 5.4C8.1 4 9.1 3.1 10.6 3" fill="none" stroke="#fff" stroke-width="0.5" opacity="0.9"/><path d="M11.6 2.7C12.2 2.8 12.8 3.2 13.2 3.8" fill="none" stroke="#fff" stroke-width="0.5" opacity="0.8"/><circle cx="15.7" cy="2.9" r="0.3" fill="#0a0a0a"/></svg>
<span class="t" style="left:690.00px;top:81.20px;font-size:5.6px;line-height:6px;color:#636363;transform:scaleX(0.923);">LexisNexis®</span>
<div class="a" style="left:719.80px;top:42.50px;width:0.80px;height:44.00px;background:#e9e9e9;"></div>
<svg class="a" style="left:728.60px;top:44.40px;" width="12.48" height="12.48" viewBox="0 0 16 16"><ellipse cx="10.2" cy="7.9" rx="5.2" ry="7.2" fill="#e3171f" transform="rotate(5 10.2 7.9)"/><path d="M8.6 0.7C4.6 1.6 3 5.4 3.5 9C3.8 11.4 4.8 13.4 6.2 14.6" fill="none" stroke="#e3171f" stroke-width="0.7"/><path d="M7.2 1.2C3.4 2.6 1.8 6 2.3 9.2C2.6 11.2 3.4 12.8 4.6 13.8" fill="none" stroke="#e3171f" stroke-width="0.6"/><path d="M5.6 2.4C2.2 4 0.8 6.8 1.2 9.4C1.4 10.8 2 12 3 12.8" fill="none" stroke="#e3171f" stroke-width="0.55"/><path d="M3.6 4.4C1 6 0 8 0.4 10" fill="none" stroke="#e3171f" stroke-width="0.45" opacity="0.7"/><path d="M7.6 3.4C8.4 2 10 1.3 11.8 1.8" fill="none" stroke="#ffd0d0" stroke-width="0.6"/><path d="M7.8 5.4C8.1 4 9.1 3.1 10.6 3" fill="none" stroke="#ffd0d0" stroke-width="0.5" opacity="0.9"/><path d="M11.6 2.7C12.2 2.8 12.8 3.2 13.2 3.8" fill="none" stroke="#ffd0d0" stroke-width="0.5" opacity="0.8"/><circle cx="15.7" cy="2.9" r="0.3" fill="#e3171f"/></svg>
<span class="t" style="left:726.00px;top:60.30px;font-size:6.2px;line-height:7px;color:#424242;transform:scaleX(0.940);">Lexis®</span>
<span class="t" style="left:726.80px;top:67.80px;font-size:6.2px;line-height:7px;color:#424242;transform:scaleX(0.919);">Create</span>
<div class="a" style="left:748.90px;top:42.50px;width:0.80px;height:44.00px;background:#e9e9e9;"></div>
<svg class="a" style="left:756.80px;top:82.60px;" width="5.4" height="3" viewBox="0 0 5.4 3"><path d="M0.4 2.6L2.7 0.5L5 2.6" fill="none" stroke="#444" stroke-width="0.65" stroke-linecap="round" stroke-linejoin="round"/></svg>
</div>
<div class="a" style="left:0.00px;top:89.60px;width:568.50px;height:1.40px;background:#f5f5f5;"></div>
<div class="a" style="left:11.00px;top:91.00px;width:546.50px;height:9.30px;background:#eeeeee;"></div>
<div class="a" style="left:105.90px;top:91.00px;width:358.50px;height:9.30px;background:#fff;"></div>
<svg class="a" style="left:3.20px;top:93.60px;" width="4" height="4" viewBox="0 0 4 4"><path d="M0.6 0.2V3.4H3.6" fill="none" stroke="#333" stroke-width="1"/></svg>
<svg class="a" style="left:0.00px;top:91.00px;" width="560" height="9.3" viewBox="0 0 560 9.3"><rect x="56.66" y="4.2" width="0.6" height="1" fill="#b8b8b8"/><rect x="62.10" y="3.2" width="0.6" height="3" fill="#b4b4b4"/><rect x="67.54" y="4.2" width="0.6" height="1" fill="#b8b8b8"/><rect x="72.98" y="3.2" width="0.6" height="3" fill="#b0b0b0"/><rect x="78.41" y="4.2" width="0.6" height="1" fill="#b8b8b8"/><rect x="83.85" y="3.2" width="0.6" height="3" fill="#b4b4b4"/><rect x="89.29" y="4.2" width="0.6" height="1" fill="#b8b8b8"/><rect x="94.73" y="3.2" width="0.6" height="3" fill="#b0b0b0"/><rect x="100.16" y="4.2" width="0.6" height="1" fill="#b8b8b8"/><rect x="111.04" y="4.2" width="0.6" height="1" fill="#b8b8b8"/><rect x="116.48" y="3.2" width="0.6" height="3" fill="#b0b0b0"/><rect x="121.91" y="4.2" width="0.6" height="1" fill="#b8b8b8"/><rect x="132.79" y="4.2" width="0.6" height="1" fill="#b8b8b8"/><rect x="138.22" y="3.2" width="0.6" height="3" fill="#b0b0b0"/><rect x="143.66" y="4.2" width="0.6" height="1" fill="#b8b8b8"/><rect x="154.54" y="4.2" width="0.6" height="1" fill="#b8b8b8"/><rect x="159.97" y="3.2" width="0.6" height="3" fill="#b0b0b0"/><rect x="165.41" y="4.2" width="0.6" height="1" fill="#b8b8b8"/><rect x="176.29" y="4.2" width="0.6" height="1" fill="#b8b8b8"/><rect x="181.72" y="3.2" width="0.6" height="3" fill="#b0b0b0"/><rect x="187.16" y="4.2" width="0.6" height="1" fill="#b8b8b8"/><rect x="198.04" y="4.2" width="0.6" height="1" fill="#b8b8b8"/><rect x="203.47" y="3.2" width="0.6" height="3" fill="#b0b0b0"/><rect x="208.91" y="4.2" width="0.6" height="1" fill="#b8b8b8"/><rect x="219.79" y="4.2" width="0.6" height="1" fill="#b8b8b8"/><rect x="225.22" y="3.2" width="0.6" height="3" fill="#b0b0b0"/><rect x="230.66" y="4.2" width="0.6" height="1" fill="#b8b8b8"/><rect x="241.54" y="4.2" width="0.6" height="1" fill="#b8b8b8"/><rect x="246.97" y="3.2" width="0.6" height="3" fill="#b0b0b0"/><rect x="252.41" y="4.2" width="0.6" height="1" fill="#b8b8b8"/><rect x="263.29" y="4.2" width="0.6" height="1" fill="#b8b8b8"/><rect x="268.72" y="3.2" width="0.6" height="3" fill="#b0b0b0"/><rect x="274.16" y="4.2" width="0.6" height="1" fill="#b8b8b8"/><rect x="285.04" y="4.2" width="0.6" height="1" fill="#b8b8b8"/><rect x="290.47" y="3.2" width="0.6" height="3" fill="#b0b0b0"/><rect x="295.91" y="4.2" width="0.6" height="1" fill="#b8b8b8"/><rect x="306.79" y="4.2" width="0.6" height="1" fill="#b8b8b8"/><rect x="312.22" y="3.2" width="0.6" height="3" fill="#b0b0b0"/><rect x="317.66" y="4.2" width="0.6" height="1" fill="#b8b8b8"/><rect x="328.54" y="4.2" width="0.6" height="1" fill="#b8b8b8"/><rect x="333.97" y="3.2" width="0.6" height="3" fill="#b0b0b0"/><rect x="339.41" y="4.2" width="0.6" height="1" fill="#b8b8b8"/><rect x="350.29" y="4.2" width="0.6" height="1" fill="#b8b8b8"/><rect x="355.72" y="3.2" width="0.6" height="3" fill="#b0b0b0"/><rect x="361.16" y="4.2" width="0.6" height="1" fill="#b8b8b8"/><rect x="372.04" y="4.2" width="0.6" height="1" fill="#b8b8b8"/><rect x="377.47" y="3.2" width="0.6" height="3" fill="#b0b0b0"/><rect x="382.91" y="4.2" width="0.6" height="1" fill="#b8b8b8"/><rect x="393.79" y="4.2" width="0.6" height="1" fill="#b8b8b8"/><rect x="399.22" y="3.2" width="0.6" height="3" fill="#b0b0b0"/><rect x="404.66" y="4.2" width="0.6" height="1" fill="#b8b8b8"/><rect x="415.54" y="4.2" width="0.6" height="1" fill="#b8b8b8"/><rect x="420.97" y="3.2" width="0.6" height="3" fill="#b0b0b0"/><rect x="426.41" y="4.2" width="0.6" height="1" fill="#b8b8b8"/><rect x="437.29" y="4.2" width="0.6" height="1" fill="#b8b8b8"/><rect x="442.72" y="3.2" width="0.6" height="3" fill="#b0b0b0"/><rect x="448.16" y="4.2" width="0.6" height="1" fill="#b8b8b8"/><rect x="459.04" y="4.2" width="0.6" height="1" fill="#b8b8b8"/><rect x="464.47" y="3.2" width="0.6" height="3" fill="#b0b0b0"/><rect x="469.91" y="4.2" width="0.6" height="1" fill="#b8b8b8"/><rect x="475.35" y="3.2" width="0.6" height="3" fill="#b4b4b4"/><rect x="480.79" y="4.2" width="0.6" height="1" fill="#b8b8b8"/><rect x="486.22" y="3.2" width="0.6" height="3" fill="#b0b0b0"/><rect x="491.66" y="4.2" width="0.6" height="1" fill="#b8b8b8"/><rect x="497.10" y="3.2" width="0.6" height="3" fill="#b4b4b4"/><rect x="502.54" y="4.2" width="0.6" height="1" fill="#b8b8b8"/><rect x="507.97" y="3.2" width="0.6" height="3" fill="#b0b0b0"/><rect x="513.41" y="4.2" width="0.6" height="1" fill="#b8b8b8"/></svg>
<span class="t" style="left:126.42px;top:93.60px;font-size:4.8px;line-height:5px;color:#6a6a6a;transform:scaleX(0.920);">1</span>
<span class="t" style="left:148.17px;top:93.60px;font-size:4.8px;line-height:5px;color:#6a6a6a;transform:scaleX(0.920);">2</span>
<span class="t" style="left:169.92px;top:93.60px;font-size:4.8px;line-height:5px;color:#6a6a6a;transform:scaleX(0.920);">3</span>
<span class="t" style="left:191.67px;top:93.60px;font-size:4.8px;line-height:5px;color:#6a6a6a;transform:scaleX(0.920);">4</span>
<span class="t" style="left:213.42px;top:93.60px;font-size:4.8px;line-height:5px;color:#6a6a6a;transform:scaleX(0.920);">5</span>
<span class="t" style="left:235.17px;top:93.60px;font-size:4.8px;line-height:5px;color:#6a6a6a;transform:scaleX(0.920);">6</span>
<span class="t" style="left:256.92px;top:93.60px;font-size:4.8px;line-height:5px;color:#6a6a6a;transform:scaleX(0.920);">7</span>
<span class="t" style="left:278.67px;top:93.60px;font-size:4.8px;line-height:5px;color:#6a6a6a;transform:scaleX(0.920);">8</span>
<span class="t" style="left:300.42px;top:93.60px;font-size:4.8px;line-height:5px;color:#6a6a6a;transform:scaleX(0.920);">9</span>
<span class="t" style="left:320.94px;top:93.60px;font-size:4.8px;line-height:5px;color:#6a6a6a;transform:scaleX(0.920);">10</span>
<span class="t" style="left:342.86px;top:93.60px;font-size:4.8px;line-height:5px;color:#6a6a6a;transform:scaleX(0.920);">11</span>
<span class="t" style="left:364.44px;top:93.60px;font-size:4.8px;line-height:5px;color:#6a6a6a;transform:scaleX(0.920);">12</span>
<span class="t" style="left:386.19px;top:93.60px;font-size:4.8px;line-height:5px;color:#6a6a6a;transform:scaleX(0.920);">13</span>
<span class="t" style="left:407.94px;top:93.60px;font-size:4.8px;line-height:5px;color:#6a6a6a;transform:scaleX(0.920);">14</span>
<span class="t" style="left:429.69px;top:93.60px;font-size:4.8px;line-height:5px;color:#6a6a6a;transform:scaleX(0.920);">15</span>
<span class="t" style="left:451.44px;top:93.60px;font-size:4.8px;line-height:5px;color:#6a6a6a;transform:scaleX(0.920);">16</span>
<svg class="a" style="left:103.30px;top:90.60px;" width="5.2" height="10" viewBox="0 0 5.2 10"><path d="M0.4 0.4H4.8L2.6 3.2Z" fill="#fff" stroke="#9a9a9a" stroke-width="0.5" stroke-linejoin="round"/><path d="M2.6 5L4.8 7.2V9.6H0.4V7.2Z" fill="#fff" stroke="#9a9a9a" stroke-width="0.5" stroke-linejoin="round"/></svg>
<svg class="a" style="left:461.70px;top:95.40px;" width="5.2" height="5" viewBox="0 0 5.2 5"><path d="M2.6 0.4L4.8 2.6V4.6H0.4V2.6Z" fill="#fff" stroke="#9a9a9a" stroke-width="0.5" stroke-linejoin="round"/></svg>
<div class="a" style="left:0.00px;top:100.30px;width:11.00px;height:347.20px;background:#eeeeee;"></div>
<div class="a" style="left:1.10px;top:147.20px;width:9.00px;height:300.30px;background:#fff;"></div>
<svg class="a" style="left:0.00px;top:0.00px;" width="11" height="447" viewBox="0 0 11 447"><rect x="4" y="103.40" width="3" height="0.6" fill="#c0c0c0"/><rect x="4.9" y="108.84" width="1.2" height="0.6" fill="#bcbcbc"/><rect x="4" y="114.27" width="3" height="0.6" fill="#c0c0c0"/><rect x="4.9" y="119.71" width="1.2" height="0.6" fill="#bcbcbc"/><rect x="4" y="125.15" width="3" height="0.6" fill="#c0c0c0"/><rect x="4.9" y="130.59" width="1.2" height="0.6" fill="#bcbcbc"/><rect x="4" y="136.02" width="3" height="0.6" fill="#c0c0c0"/><rect x="4.9" y="141.46" width="1.2" height="0.6" fill="#bcbcbc"/><rect x="4" y="146.90" width="3" height="0.6" fill="#c0c0c0"/><rect x="4.9" y="152.34" width="1.2" height="0.6" fill="#bcbcbc"/><rect x="4" y="157.77" width="3" height="0.6" fill="#c0c0c0"/><rect x="4.9" y="163.21" width="1.2" height="0.6" fill="#bcbcbc"/><rect x="4.9" y="174.09" width="1.2" height="0.6" fill="#bcbcbc"/><rect x="4" y="179.52" width="3" height="0.6" fill="#c0c0c0"/><rect x="4.9" y="184.96" width="1.2" height="0.6" fill="#bcbcbc"/><rect x="4.9" y="195.84" width="1.2" height="0.6" fill="#bcbcbc"/><rect x="4" y="201.27" width="3" height="0.6" fill="#c0c0c0"/><rect x="4.9" y="206.71" width="1.2" height="0.6" fill="#bcbcbc"/><rect x="4.9" y="217.59" width="1.2" height="0.6" fill="#bcbcbc"/><rect x="4" y="223.02" width="3" height="0.6" fill="#c0c0c0"/><rect x="4.9" y="228.46" width="1.2" height="0.6" fill="#bcbcbc"/><rect x="4.9" y="239.34" width="1.2" height="0.6" fill="#bcbcbc"/><rect x="4" y="244.77" width="3" height="0.6" fill="#c0c0c0"/><rect x="4.9" y="250.21" width="1.2" height="0.6" fill="#bcbcbc"/><rect x="4.9" y="261.09" width="1.2" height="0.6" fill="#bcbcbc"/><rect x="4" y="266.52" width="3" height="0.6" fill="#c0c0c0"/><rect x="4.9" y="271.96" width="1.2" height="0.6" fill="#bcbcbc"/><rect x="4.9" y="282.84" width="1.2" height="0.6" fill="#bcbcbc"/><rect x="4" y="288.27" width="3" height="0.6" fill="#c0c0c0"/><rect x="4.9" y="293.71" width="1.2" height="0.6" fill="#bcbcbc"/><rect x="4.9" y="304.59" width="1.2" height="0.6" fill="#bcbcbc"/><rect x="4" y="310.02" width="3" height="0.6" fill="#c0c0c0"/><rect x="4.9" y="315.46" width="1.2" height="0.6" fill="#bcbcbc"/><rect x="4.9" y="326.34" width="1.2" height="0.6" fill="#bcbcbc"/><rect x="4" y="331.77" width="3" height="0.6" fill="#c0c0c0"/><rect x="4.9" y="337.21" width="1.2" height="0.6" fill="#bcbcbc"/><rect x="4.9" y="348.09" width="1.2" height="0.6" fill="#bcbcbc"/><rect x="4" y="353.52" width="3" height="0.6" fill="#c0c0c0"/><rect x="4.9" y="358.96" width="1.2" height="0.6" fill="#bcbcbc"/><rect x="4.9" y="369.84" width="1.2" height="0.6" fill="#bcbcbc"/><rect x="4" y="375.27" width="3" height="0.6" fill="#c0c0c0"/><rect x="4.9" y="380.71" width="1.2" height="0.6" fill="#bcbcbc"/><rect x="4.9" y="391.59" width="1.2" height="0.6" fill="#bcbcbc"/><rect x="4" y="397.02" width="3" height="0.6" fill="#c0c0c0"/><rect x="4.9" y="402.46" width="1.2" height="0.6" fill="#bcbcbc"/><rect x="4.9" y="413.34" width="1.2" height="0.6" fill="#bcbcbc"/><rect x="4" y="418.77" width="3" height="0.6" fill="#c0c0c0"/><rect x="4.9" y="424.21" width="1.2" height="0.6" fill="#bcbcbc"/><rect x="4.9" y="435.09" width="1.2" height="0.6" fill="#bcbcbc"/><rect x="4" y="440.52" width="3" height="0.6" fill="#c0c0c0"/></svg>
<span class="t" style="left:5.6px;top:168.95px;font-size:4.6px;line-height:5px;color:#6a6a6a;transform:translate(-50%,-50%) rotate(-90deg);transform-origin:50% 50%">1</span>
<span class="t" style="left:5.6px;top:190.70px;font-size:4.6px;line-height:5px;color:#6a6a6a;transform:translate(-50%,-50%) rotate(-90deg);transform-origin:50% 50%">2</span>
<span class="t" style="left:5.6px;top:212.45px;font-size:4.6px;line-height:5px;color:#6a6a6a;transform:translate(-50%,-50%) rotate(-90deg);transform-origin:50% 50%">3</span>
<span class="t" style="left:5.6px;top:234.20px;font-size:4.6px;line-height:5px;color:#6a6a6a;transform:translate(-50%,-50%) rotate(-90deg);transform-origin:50% 50%">4</span>
<span class="t" style="left:5.6px;top:255.95px;font-size:4.6px;line-height:5px;color:#6a6a6a;transform:translate(-50%,-50%) rotate(-90deg);transform-origin:50% 50%">5</span>
<span class="t" style="left:5.6px;top:277.70px;font-size:4.6px;line-height:5px;color:#6a6a6a;transform:translate(-50%,-50%) rotate(-90deg);transform-origin:50% 50%">6</span>
<span class="t" style="left:5.6px;top:299.45px;font-size:4.6px;line-height:5px;color:#6a6a6a;transform:translate(-50%,-50%) rotate(-90deg);transform-origin:50% 50%">7</span>
<span class="t" style="left:5.6px;top:321.20px;font-size:4.6px;line-height:5px;color:#6a6a6a;transform:translate(-50%,-50%) rotate(-90deg);transform-origin:50% 50%">8</span>
<span class="t" style="left:5.6px;top:342.95px;font-size:4.6px;line-height:5px;color:#6a6a6a;transform:translate(-50%,-50%) rotate(-90deg);transform-origin:50% 50%">9</span>
<span class="t" style="left:5.6px;top:364.70px;font-size:4.6px;line-height:5px;color:#6a6a6a;transform:translate(-50%,-50%) rotate(-90deg);transform-origin:50% 50%">10</span>
<span class="t" style="left:5.6px;top:386.45px;font-size:4.6px;line-height:5px;color:#6a6a6a;transform:translate(-50%,-50%) rotate(-90deg);transform-origin:50% 50%">11</span>
<span class="t" style="left:5.6px;top:408.20px;font-size:4.6px;line-height:5px;color:#6a6a6a;transform:translate(-50%,-50%) rotate(-90deg);transform-origin:50% 50%">12</span>
<span class="t" style="left:5.6px;top:429.95px;font-size:4.6px;line-height:5px;color:#6a6a6a;transform:translate(-50%,-50%) rotate(-90deg);transform-origin:50% 50%">13</span>
<div class="a" style="left:557.50px;top:91.00px;width:11.00px;height:356.50px;background:#f1f1f1;"></div>
<svg class="a" style="left:561.20px;top:103.40px;" width="5.8" height="3.8" viewBox="0 0 5.8 3.8"><path d="M0.2 3.5L2.9 0.3L5.6 3.5Z" fill="#5a5a5a"/></svg>
<div class="a" style="left:561.90px;top:110.80px;width:4.20px;height:22.90px;background:#6e6e6e;border-radius:2.1px"></div>
<svg class="a" style="left:561.20px;top:440.80px;" width="5.8" height="3.8" viewBox="0 0 5.8 3.8"><path d="M0.2 0.3L2.9 3.5L5.6 0.3Z" fill="#5a5a5a"/></svg>
<div class="a" style="left:568.50px;top:90.40px;width:203.50px;height:357.10px;background:#f0f0f0;"></div>
<div class="a" style="left:568.50px;top:90.40px;width:0.70px;height:357.10px;background:#e4e4e4;"></div>
<div class="a" style="left:570.20px;top:107.60px;width:174.60px;height:338.20px;background:#fff;"></div>
<div class="a" style="left:744.80px;top:107.60px;width:27.20px;height:338.20px;background:#e6e6e6;"></div>
<span class="t" style="left:573.00px;top:94.80px;font-size:10.4px;line-height:11px;color:#4d4d4d;transform:scaleX(0.890);">Lexis</span>
<span class="t" style="left:595.90px;top:95.10px;font-size:8.6px;line-height:10px;color:#4d4d4d;transform:scaleX(1.026);">®</span>
<span class="t" style="left:607.20px;top:94.80px;font-size:10.4px;line-height:11px;color:#4d4d4d;transform:scaleX(0.945);">Create</span>
<svg class="a" style="left:742.50px;top:98.60px;" width="7.2" height="4.2" viewBox="0 0 7.2 4.2"><path d="M0.4 0.5L3.6 3.6L6.8 0.5" fill="none" stroke="#444" stroke-width="0.7" stroke-linecap="round" stroke-linejoin="round"/></svg>
<svg class="a" style="left:759.40px;top:98.00px;" width="5.8" height="5.2" viewBox="0 0 5.8 5.2"><path d="M0.4 0.4L5.4 4.8M5.4 0.4L0.4 4.8" stroke="#444" stroke-width="0.7" stroke-linecap="round"/></svg>
<div class="a" style="left:579.20px;top:115.50px;width:156.60px;height:26.00px;background:#fff;border:0.6px solid #ededed;box-shadow:0 0.4px 0.6px rgba(0,0,0,.04)"></div>
<div class="a" style="left:579.20px;top:115.50px;width:25.40px;height:26.00px;background:#ebebeb;"></div>
<svg class="a" style="left:587.80px;top:123.30px;" width="10.4" height="10.6" viewBox="0 0 10.4 10.6"><path d="M0.6 0.5H5.4L7.8 3V4.4M0.6 0.5V10.1H4.4" fill="none" stroke="#222" stroke-width="0.95" stroke-linejoin="round"/><path d="M4.2 10L4.7 7.5L8.4 3.8A0.95 0.95 0 0 1 9.8 5.2L6.1 8.9Z" fill="#222" stroke="#222" stroke-width="0.4" stroke-linejoin="round"/><path d="M5.3 0.7V3.1H7.6" fill="none" stroke="#222" stroke-width="0.55"/></svg>
<span class="t" style="left:611.70px;top:125.00px;font-size:8.7px;line-height:10px;color:#666;transform:scaleX(0.882);">Redact</span>
<div class="a" style="left:579.20px;top:145.70px;width:156.60px;height:26.00px;background:#fff;border:0.6px solid #ededed;box-shadow:0 0.4px 0.6px rgba(0,0,0,.04)"></div>
<div class="a" style="left:579.20px;top:145.70px;width:25.40px;height:26.00px;background:#ebebeb;"></div>
<svg class="a" style="left:587.80px;top:153.50px;" width="10.4" height="8.4" viewBox="0 0 10.4 8.4"><rect x="0.5" y="0.5" width="9.4" height="7.4" rx="0.9" fill="none" stroke="#222" stroke-width="0.9"/><path d="M2.2 2.6H7.8" stroke="#222" stroke-width="0.6"/><rect x="2.2" y="3.8" width="2.6" height="2.4" fill="none" stroke="#222" stroke-width="0.5"/><path d="M5.8 4.2H7.8M5.8 5.6H7.8" stroke="#222" stroke-width="0.5"/></svg>
<span class="t" style="left:611.70px;top:155.00px;font-size:8.7px;line-height:10px;color:#666;transform:scaleX(0.931);">Report</span>
<div class="a" style="left:579.20px;top:175.90px;width:156.60px;height:26.00px;background:#fff;border:0.6px solid #ededed;box-shadow:0 0.4px 0.6px rgba(0,0,0,.04)"></div>
<div class="a" style="left:579.20px;top:175.90px;width:25.40px;height:26.00px;background:#ebebeb;"></div>
<svg class="a" style="left:588.00px;top:184.40px;" width="10" height="12" viewBox="0 0 10 12"><path d="M0.6 1.6A1.1 1.1 0 0 1 1.7 0.5H6L9.4 3.9V10.4A1.1 1.1 0 0 1 8.3 11.5H1.7A1.1 1.1 0 0 1 0.6 10.4Z" fill="none" stroke="#222" stroke-width="0.9" stroke-linejoin="round"/><path d="M5.8 0.7V4.1H9.2" fill="none" stroke="#222" stroke-width="0.6"/><path d="M2.6 6H7.4M2.6 7.6H7.4M2.6 9.2H7.4" stroke="#222" stroke-width="0.7"/></svg>
<span class="t" style="left:611.70px;top:185.00px;font-size:8.7px;line-height:10px;color:#666;transform:scaleX(0.869);">Final Check</span>
<div class="a" style="left:579.20px;top:206.10px;width:156.60px;height:26.00px;background:#fff;border:0.6px solid #ededed;box-shadow:0 0.4px 0.6px rgba(0,0,0,.04)"></div>
<div class="a" style="left:579.20px;top:206.10px;width:25.40px;height:26.00px;background:#ebebeb;"></div>
<svg class="a" style="left:587.60px;top:214.00px;" width="10.6" height="10.6" viewBox="0 0 10.6 10.6"><path d="M2.4 4.6V1.6A1 1 0 0 1 3.4 0.6H7L10 3.6V9A1 1 0 0 1 9 10H6.4" fill="none" stroke="#222" stroke-width="0.9" stroke-linejoin="round"/><path d="M6.8 0.8V3.8H9.8" fill="none" stroke="#222" stroke-width="0.6"/><circle cx="2.9" cy="7.8" r="2.7" fill="#222"/><path d="M1.6 7.9L2.6 8.9L4.3 6.9" fill="none" stroke="#fff" stroke-width="0.7"/></svg>
<span class="t" style="left:611.70px;top:215.00px;font-size:8.7px;line-height:10px;color:#666;transform:scaleX(0.904);">Finalise Document</span>
<div class="a" style="left:579.20px;top:236.30px;width:156.60px;height:26.00px;background:#fff;border:0.6px solid #ededed;box-shadow:0 0.4px 0.6px rgba(0,0,0,.04)"></div>
<div class="a" style="left:579.20px;top:236.30px;width:25.40px;height:26.00px;background:#ebebeb;"></div>
<svg class="a" style="left:588.00px;top:244.00px;" width="7.6" height="10" viewBox="0 0 7.6 10"><path d="M3.8 0.4V7.2M0.8 4.4L3.8 7.4L6.8 4.4" fill="none" stroke="#333" stroke-width="0.7" stroke-linejoin="round"/><path d="M0.2 9.6H7.4" stroke="#333" stroke-width="0.8"/></svg>
<span class="t" style="left:611.70px;top:245.00px;font-size:8.7px;line-height:10px;color:#666;transform:scaleX(0.899);">DocuSign</span>
<svg class="a" style="left:754.60px;top:110.30px;" width="8.8" height="8.4" viewBox="0 0 8.8 8.4"><path d="M0.6 1H6.4M0.6 3H4.6M0.6 5H3" stroke="#333" stroke-width="0.7"/><path d="M2.6 8L3.2 6.2L7 2.2A0.9 0.9 0 0 1 8.3 3.5L4.4 7.4Z" fill="none" stroke="#333" stroke-width="0.65" stroke-linejoin="round"/></svg>
<span class="t" style="left:754.40px;top:119.60px;font-size:3.9px;line-height:5px;color:#555;transform:scaleX(1.015);">Build</span>
<svg class="a" style="left:755.00px;top:130.30px;" width="7.6" height="8.4" viewBox="0 0 7.6 8.4"><path d="M2 2V0.5H5L7 2.5V7.9H4.6" fill="none" stroke="#333" stroke-width="0.65" stroke-linejoin="round"/><circle cx="2.6" cy="4.6" r="2" fill="none" stroke="#333" stroke-width="0.65"/><path d="M4 6.1L5.6 7.9" stroke="#333" stroke-width="0.7"/></svg>
<span class="t" style="left:753.50px;top:139.60px;font-size:3.9px;line-height:5px;color:#555;transform:scaleX(0.941);">Check</span>
<div class="a" style="left:746.80px;top:147.70px;width:1.10px;height:19.80px;background:#2b7de0;"></div>
<svg class="a" style="left:755.50px;top:150.60px;" width="6.8" height="8.4" viewBox="0 0 6.8 8.4"><rect x="0.3" y="0.9" width="6.2" height="7.3" rx="0.8" fill="#2b7de0"/><rect x="2.1" y="0.1" width="2.6" height="1.6" rx="0.5" fill="#2b7de0" stroke="#e6e6e6" stroke-width="0.3"/><path d="M1.6 3.6H5.2M1.6 5H4M1.6 6.4H5.2" stroke="#cfe3fb" stroke-width="0.5"/></svg>
<span class="t" style="left:750.20px;top:159.80px;font-size:3.9px;line-height:5px;color:#2b7de0;transform:scaleX(1.019);">Complete</span>
<svg class="a" style="left:755.00px;top:170.80px;" width="7.6" height="7.8" viewBox="0 0 7.6 7.8"><rect x="0.4" y="0.4" width="6.8" height="7" rx="0.5" fill="none" stroke="#333" stroke-width="0.75"/><circle cx="3.6" cy="3.4" r="1.4" fill="none" stroke="#333" stroke-width="0.6"/><path d="M4.6 4.4L5.8 5.8" stroke="#333" stroke-width="0.6"/></svg>
<span class="t" style="left:750.20px;top:180.00px;font-size:3.9px;line-height:5px;color:#555;transform:scaleX(1.018);">Guidance</span>
<svg class="a" style="left:754.60px;top:427.20px;" width="8.6" height="7.8" viewBox="0 0 8.6 7.8"><path d="M3 0.4H5.6L6 1.5L7 2.1L8.1 1.9L8.4 3.9L7.6 4.5V5L8.4 5.8L7.2 7.4L6 7L5.6 7.4H3L2.6 7L1.4 7.4L0.2 5.8L1 5V4.5L0.2 3.9L0.5 1.9L1.6 2.1L2.6 1.5Z" fill="none" stroke="#333" stroke-width="0.6" stroke-linejoin="round" transform="translate(0,-0.1)"/><circle cx="4.3" cy="3.8" r="1.3" fill="none" stroke="#333" stroke-width="0.6"/></svg>
<span class="t" style="left:751.50px;top:435.90px;font-size:3.7px;line-height:4px;color:#555;transform:scaleX(1.070);">Settings</span>
<div class="a" style="left:0.00px;top:447.20px;width:772.00px;height:11.60px;background:#f2f2f2;border-top:0.6px solid #d6d6d6"></div>
<span class="t" style="left:5.10px;top:451.00px;font-size:4.9px;line-height:5px;color:#444;transform:scaleX(1.081);">Page 1 of 8</span>
<span class="t" style="left:41.50px;top:451.00px;font-size:4.9px;line-height:5px;color:#444;transform:scaleX(1.094);">1505 words</span>
<svg class="a" style="left:78.10px;top:449.60px;" width="7.2" height="6.4" viewBox="0 0 7.2 6.4"><rect x="0.4" y="0.4" width="5.2" height="5" fill="none" stroke="#444" stroke-width="0.6"/><path d="M2.8 0.4V5.4" stroke="#444" stroke-width="0.5"/><path d="M4.4 3.4L6.8 6M6.8 3.4L4.4 6" stroke="#444" stroke-width="0.6"/></svg>
<span class="t" style="left:93.70px;top:451.00px;font-size:4.9px;line-height:5px;color:#444;transform:scaleX(1.056);">English (Australia)</span>
<span class="t" style="left:145.00px;top:451.00px;font-size:4.9px;line-height:5px;color:#444;transform:scaleX(1.045);">Track Changes: Off</span>
<span class="t" style="left:195.60px;top:451.00px;font-size:4.9px;line-height:5px;color:#444;transform:scaleX(1.074);">Text Predictions: On</span>
<svg class="a" style="left:252.00px;top:449.60px;" width="7" height="6.6" viewBox="0 0 7 6.6"><rect x="0.3" y="0.3" width="6.4" height="4.6" fill="#555"/><path d="M1.2 1.4H5.8M1.2 2.6H5.8M1.2 3.8H4" stroke="#ddd" stroke-width="0.45"/><path d="M2 5.4H5M3.5 4.8V6.4" stroke="#555" stroke-width="0.6"/><circle cx="5.6" cy="5.2" r="1.2" fill="#555"/></svg>
<svg class="a" style="left:267.90px;top:449.40px;" width="7" height="7" viewBox="0 0 7 7"><circle cx="2.6" cy="1" r="0.8" fill="none" stroke="#444" stroke-width="0.5"/><path d="M0.4 2.6H4.8M2.6 2.6V4.4M2.6 4.4L1.2 6.6M2.6 4.4L3.4 5.4" fill="none" stroke="#444" stroke-width="0.55"/><path d="M4.2 5.4L5.2 6.4L6.8 4.4" fill="none" stroke="#444" stroke-width="0.6"/></svg>
<span class="t" style="left:276.80px;top:451.00px;font-size:4.9px;line-height:5px;color:#444;transform:scaleX(1.094);">Accessibility: Good to go</span>
<svg class="a" style="left:595.30px;top:449.40px;" width="7.4" height="7" viewBox="0 0 7.4 7"><path d="M0.4 1.8V0.4H1.8M5.6 0.4H7V1.8M7 5.2V6.6H5.6M1.8 6.6H0.4V5.2" fill="none" stroke="#444" stroke-width="0.55"/><path d="M2.2 1.4H4.4L5.4 2.4V5.6H2.2Z" fill="none" stroke="#444" stroke-width="0.55"/></svg>
<span class="t" style="left:604.40px;top:451.00px;font-size:4.9px;line-height:5px;color:#444;transform:scaleX(0.967);">Focus</span>
<svg class="a" style="left:629.50px;top:449.80px;" width="6.6" height="6.2" viewBox="0 0 6.6 6.2"><path d="M0.3 0.5H3.3V5.7H0.3ZM3.3 0.5H6.3V5.7H3.3Z" fill="none" stroke="#444" stroke-width="0.6"/><path d="M1 1.8H2.6M1 3H2.6M1 4.2H2.6M4 1.8H5.6M4 3H5.6M4 4.2H5.6" stroke="#666" stroke-width="0.4"/></svg>
<div class="a" style="left:643.20px;top:447.80px;width:19.50px;height:11.00px;background:#dadada;"></div>
<svg class="a" style="left:649.70px;top:449.60px;" width="6" height="6.8" viewBox="0 0 6 6.8"><rect x="0.4" y="0.4" width="5.2" height="6" fill="#bdbdbd" stroke="#444" stroke-width="0.7"/><path d="M1.4 1.8H4.6M1.4 3H4.6M1.4 4.2H4.6M1.4 5.2H4.6" stroke="#555" stroke-width="0.45"/></svg>
<svg class="a" style="left:669.20px;top:449.60px;" width="7.4" height="6.8" viewBox="0 0 7.4 6.8"><rect x="0.4" y="0.4" width="5.4" height="5.8" fill="none" stroke="#444" stroke-width="0.6"/><path d="M1.2 1.6H5M1.2 2.8H3.4M1.2 4H3" stroke="#555" stroke-width="0.45"/><circle cx="5.2" cy="4.8" r="1.9" fill="#444"/></svg>
<div class="a" style="left:686.00px;top:452.10px;width:3.40px;height:0.75px;background:#3c3c3c;"></div>
<div class="a" style="left:692.50px;top:452.30px;width:49.20px;height:0.60px;background:#9a9a9a;"></div>
<div class="a" style="left:717.30px;top:449.30px;width:2.30px;height:6.90px;background:#3c3c3c;border-radius:0.6px"></div>
<svg class="a" style="left:744.40px;top:450.40px;" width="4.2" height="4.2" viewBox="0 0 4.2 4.2"><path d="M0.2 2.1H4M2.1 0.2V4" stroke="#3c3c3c" stroke-width="0.75"/></svg>
<span class="t" style="left:755.40px;top:451.00px;font-size:4.9px;line-height:5px;color:#444;transform:scaleX(1.044);">114%</span>
</div>
<div id="doc">
<span class="t" style="left:106.2px;top:147.00px;font-size:8.4px;line-height:10px;font-weight:700;">Deed of variation of lease</span>
<span class="t" style="left:106.2px;top:171.00px;font-size:7.65px;line-height:9px;">This deed is dated 8 December 2021</span>
<span class="t" style="left:106.2px;top:189.00px;font-size:7.65px;line-height:9px;">between</span>
<span class="t" style="left:106.2px;top:207.00px;font-size:7.65px;line-height:9px;">[Landlord name] of 19 Lane Cove Road, Ryde NSW (<b>Landlord</b>)</span>
<span class="t" style="left:106.2px;top:225.00px;font-size:7.65px;line-height:9px;">and</span>
<span class="t" style="left:106.2px;top:243.00px;font-size:7.65px;line-height:9px;"><span style="word-spacing:0.3px">John Langdon of [Tenant address] </span>(<b>Tenant</b>)</span>
<span class="t" style="left:106.2px;top:270.00px;font-size:7.65px;line-height:9px;font-weight:700;">BACKGROUND</span>
<span class="t" style="left:106.2px;top:288.00px;font-size:7.65px;line-height:9px;">A.</span>
<span class="t" style="left:128.0px;top:288.00px;font-size:7.65px;line-height:9px;">The Landlord is the owner of the Premises.</span>
<span class="t" style="left:106.2px;top:306.00px;font-size:7.65px;line-height:9px;">B.</span>
<span class="t" style="left:128.0px;top:306.00px;font-size:7.65px;line-height:9px;">The Landlord and the Tenant have <u>entered into</u> the Lease.</span>
<span class="t" style="left:106.2px;top:324.00px;font-size:7.65px;line-height:9px;">C.</span>
<span class="t" style="left:128.0px;top:324.00px;font-size:7.65px;line-height:9px;">[Enter text]</span>
<span class="t" style="left:106.2px;top:342.00px;font-size:7.65px;line-height:9px;">D.</span>
<span class="t" style="left:128.0px;top:342.00px;font-size:7.65px;line-height:9px;"><span style="word-spacing:0.15px">In consideration of the mutual promises contained in this deed, the Landlord and the Tenant have</span></span>
<span class="t" style="left:128.0px;top:350.00px;font-size:7.65px;line-height:9px;">agreed to vary the Lease, subject to the terms of this deed.</span>
<span class="t" style="left:106.2px;top:377.00px;font-size:7.65px;line-height:9px;font-weight:700;">OPERATIVE PROVISIONS</span>
<span class="t" style="left:106.2px;top:395.00px;font-size:8.4px;line-height:10px;font-weight:700;">1</span>
<span class="t" style="left:128.0px;top:395.00px;font-size:8.4px;line-height:10px;font-weight:700;">Definitions and interpretation</span>
<div class="a" style="left:105.00px;top:405.00px;width:360.30px;height:0.85px;background:#1a1a1a;"></div>
<span class="t" style="left:106.2px;top:416.00px;font-size:7.65px;line-height:9px;font-weight:700;">1.1</span>
<span class="t" style="left:128.0px;top:416.00px;font-size:7.65px;line-height:9px;font-weight:700;">Definitions</span>
<span class="t" style="left:128.0px;top:434.00px;font-size:7.65px;line-height:9px;">In this deed, unless otherwise indicated by the context:</span>
</div>
</div>
</body></html>
